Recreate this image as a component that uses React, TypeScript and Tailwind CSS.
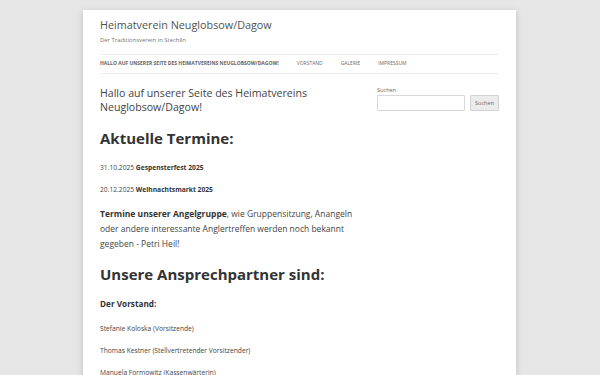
import React from "react";

export default function App() {
  const f = { fontFamily: '"Open Sans", "Liberation Sans", sans-serif' };
  return (
    <div className="h-[375px] overflow-hidden bg-[#e6e6e6] pt-[10px]" style={f}>
      <div className="ml-[83px] h-[400px] w-[433px] bg-white px-[17px] shadow-[0_2px_6px_rgba(100,100,100,0.3)]">
        <header className="pt-[7px]">
          <div className="text-[10.8px] leading-[16px] text-[#515151]">Heimatverein Neuglobsow/Dagow</div>
          <div className="mt-[3px] text-[5.9px] leading-[8px] text-[#757575]">Der Traditionsverein in Stechlin</div>
          <nav className="mt-[10px] flex h-[20px] items-center gap-[18px] border-y border-[#ededed] text-[5px] uppercase text-[#6a6a6a]">
            <span className="font-bold text-[#636363]">Hallo auf unserer Seite des Heimatvereins Neuglobsow/Dagow!</span>
            <span>Vorstand</span>
            <span>Galerie</span>
            <span>Impressum</span>
          </nav>
        </header>
        <div className="flex">
          <main className="w-[260px] pt-[12px] text-[#444]">
            <h1 className="text-[10.6px] leading-[14px]">Hallo auf unserer Seite des Heimatvereins Neuglobsow/Dagow!</h1>
            <h2 className="mt-[15px] text-[15px] font-bold leading-[18px] text-[#333]">Aktuelle Termine:</h2>
            <p className="mt-[14.5px] text-[6.7px] leading-[11px]">
              31.10.2025 <b className="text-[#333]">Gespensterfest 2025</b>
            </p>
            <p className="mt-[11px] text-[6.7px] leading-[11px]">
              20.12.2025 <b className="text-[#333]">Weihnachtsmarkt 2025</b>
            </p>
            <p className="mt-[11px] text-[8.5px] leading-[15px]">
              <b className="text-[#333]">Termine unserer Angelgruppe</b>, wie Gruppensitzung, Anangeln oder andere interessante Anglertreffen werden noch bekannt gegeben - Petri Heil!
            </p>
            <h2 className="mt-[14.5px] text-[15px] font-bold leading-[18px] text-[#333]">Unsere Ansprechpartner sind:</h2>
            <h3 className="mt-[16px] text-[8.2px] font-bold leading-[10px] text-[#333]">Der Vorstand:</h3>
            <p className="mt-[13.5px] text-[6.7px] leading-[11px]">Stefanie Koloska (Vorsitzende)</p>
            <p className="mt-[11px] text-[6.7px] leading-[11px]">Thomas Kestner (Stellvertretender Vorsitzender)</p>
            <p className="mt-[11px] text-[6.7px] leading-[11px]">Manuela Formowitz (Kassenwärterin)</p>
          </main>
          <aside className="ml-auto w-[122px] pt-[12px]">
            <div className="text-[5.6px] leading-[8px] text-[#636363]">Suchen</div>
            <div className="mt-[1px] flex items-center gap-[5px]">
              <div className="h-[16px] w-[88px] rounded-[1px] border border-[#d8d8d8] bg-white" />
              <div className="flex h-[16px] w-[29px] items-center justify-center rounded-[1px] border border-[#d2d2d2] bg-[#ececec] text-[5.6px] text-[#6a6a6a]">
                Suchen
              </div>
            </div>
          </aside>
        </div>
      </div>
    </div>
  );
}
